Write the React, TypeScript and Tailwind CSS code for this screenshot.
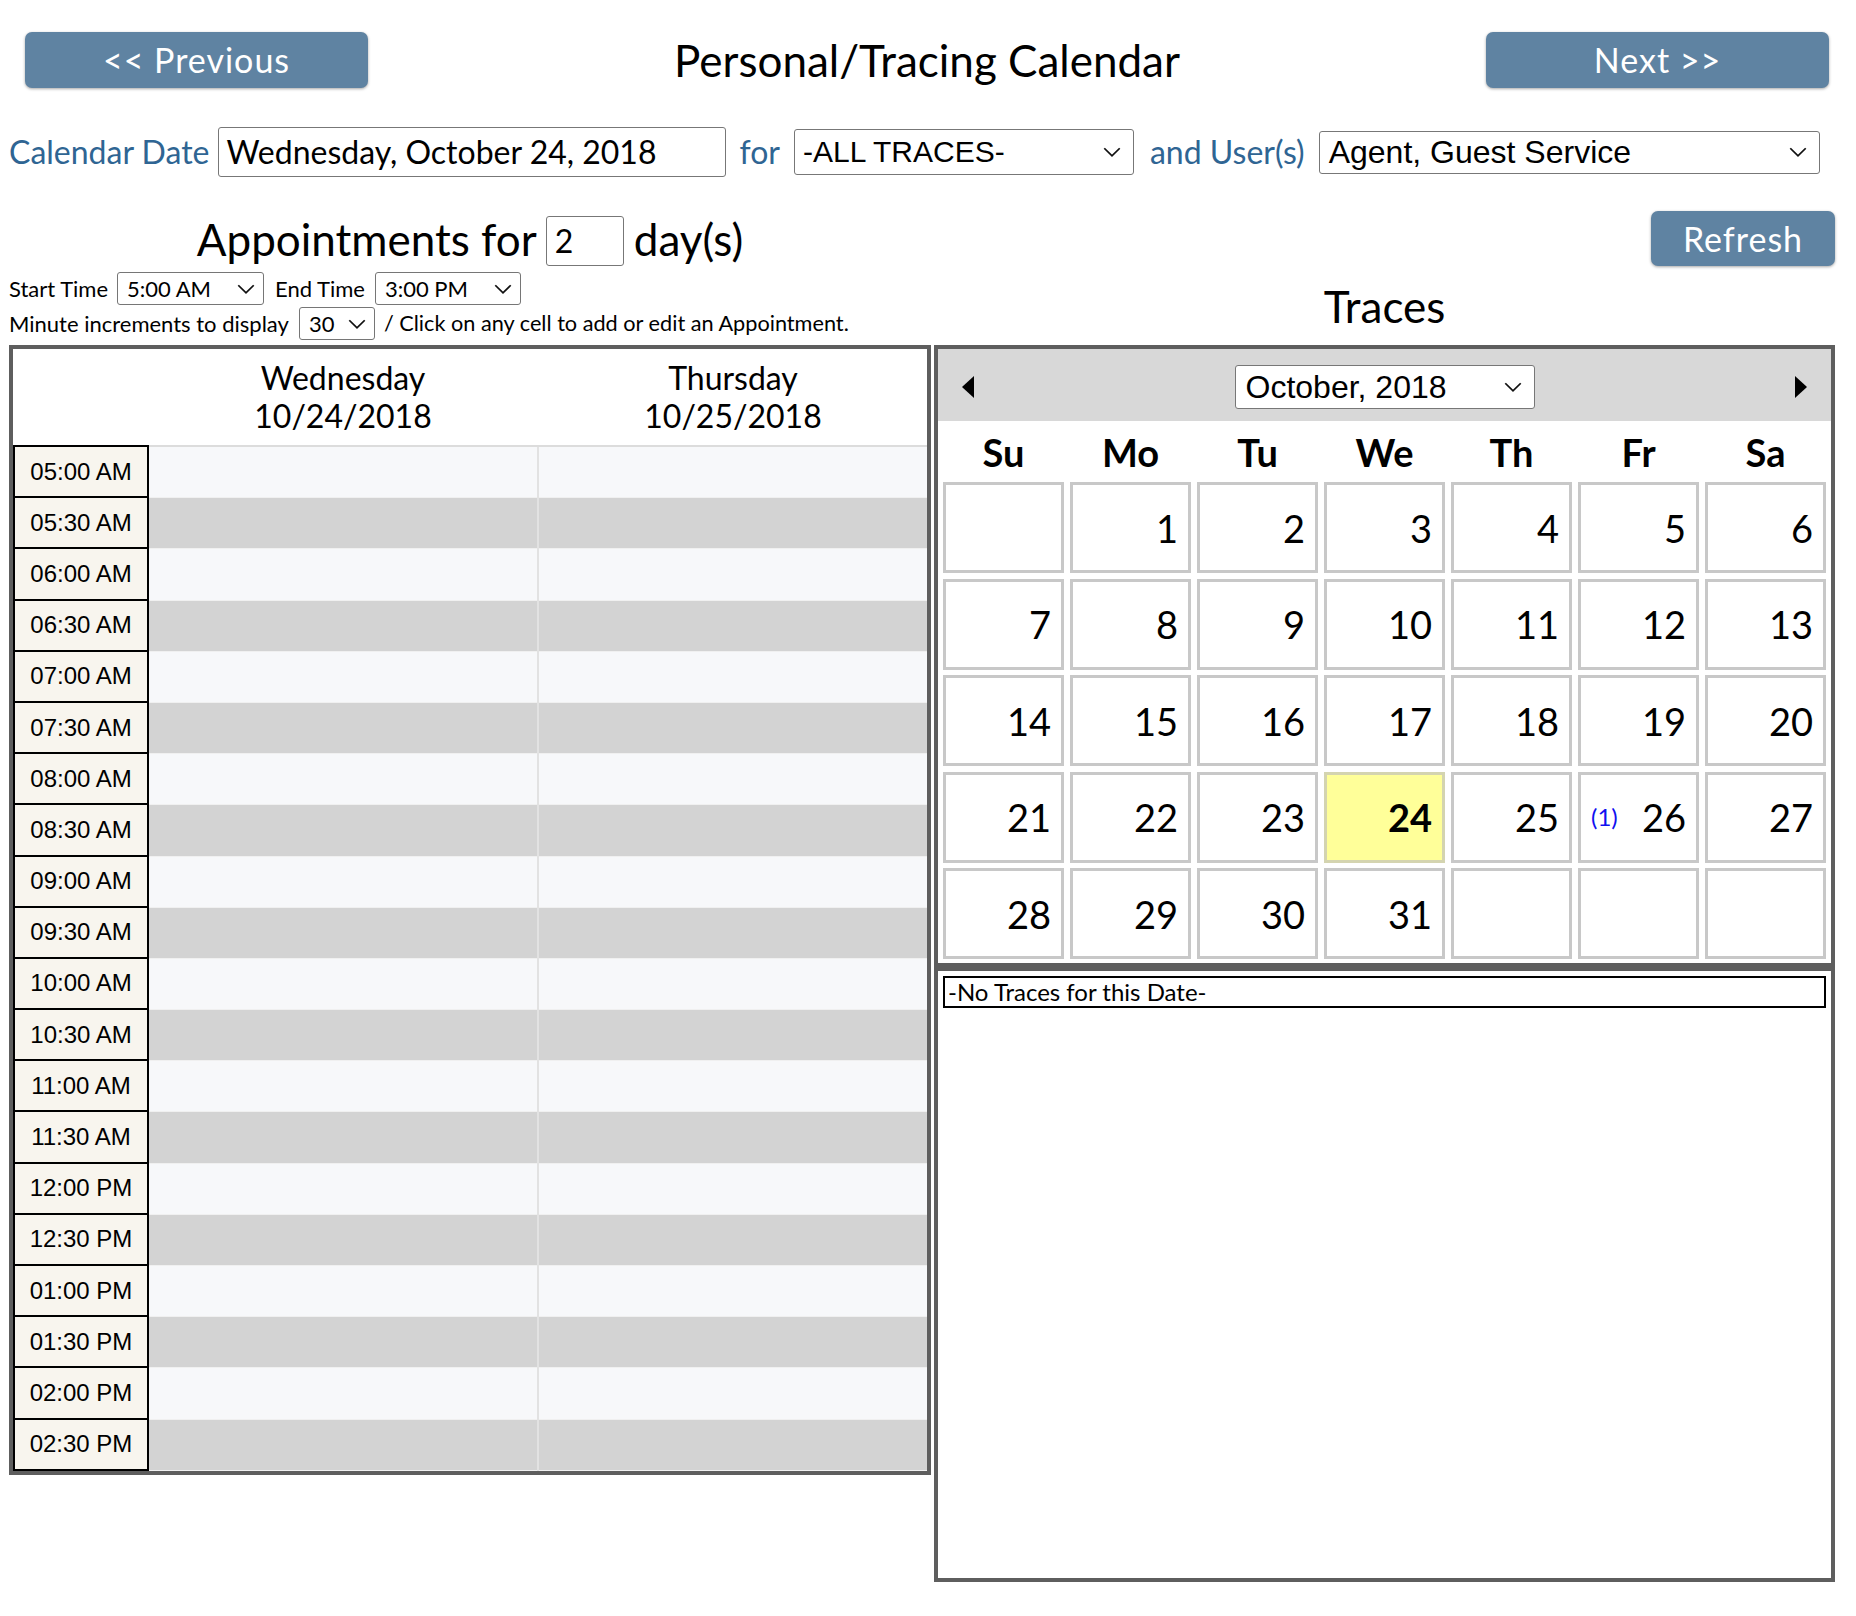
import React from "react";

const Chevron = ({ w = 14, h = 8 }: { w?: number; h?: number }) => (
  <svg width={w} height={h} viewBox="0 0 14 8" fill="none" preserveAspectRatio="none">
    <polyline points="1,1 7,7 13,1" stroke="#111" strokeWidth="1.4" fill="none" />
  </svg>
);

const Btn = ({ children, w, h }: { children: React.ReactNode; w: string; h: string }) => (
  <div
    className={`${w} ${h} rounded-[7px] bg-[#5f83a2] text-white text-[34px] tracking-[1px] leading-none flex items-center justify-center shadow-[0_1px_3px_rgba(0,0,0,0.35)]`}
  >
    {children}
  </div>
);

const times = [
  "05:00 AM", "05:30 AM", "06:00 AM", "06:30 AM", "07:00 AM", "07:30 AM", "08:00 AM", "08:30 AM",
  "09:00 AM", "09:30 AM", "10:00 AM", "10:30 AM", "11:00 AM", "11:30 AM", "12:00 PM", "12:30 PM",
  "01:00 PM", "01:30 PM", "02:00 PM", "02:30 PM",
];

const days: (number | null)[] = [
  null, 1, 2, 3, 4, 5, 6,
  7, 8, 9, 10, 11, 12, 13,
  14, 15, 16, 17, 18, 19, 20,
  21, 22, 23, 24, 25, 26, 27,
  28, 29, 30, 31, null, null, null,
];

const SmallSelect = ({ w, value }: { w: string; value: string }) => (
  <div className={`${w} h-[33px] border border-[#767676] rounded-[3px] flex items-center justify-between pl-[9px] pr-[8px] text-[22px] leading-none bg-white`}>
    <span>{value}</span>
    <Chevron w={18} h={10} />
  </div>
);

export default function App() {
  return (
    <div className="w-[1856px] min-h-[1616px] bg-white font-['Lato',sans-serif] text-black">
      {/* Header */}
      <div className="flex items-center justify-between pl-[25px] pr-[27px] pt-[32px]">
        <Btn w="w-[343px]" h="h-[56px]">&lt;&lt; Previous</Btn>
        <div className="text-[44px] leading-none">Personal/Tracing Calendar</div>
        <Btn w="w-[343px]" h="h-[56px]">Next &gt;&gt;</Btn>
      </div>

      {/* Filter row */}
      <div className="mt-[39px] h-[50px] flex items-center pl-[9px] text-[32px] leading-none">
        <span className="text-[#2f6593]">Calendar Date</span>
        <div className="ml-[9px] w-[508px] h-[50px] border border-[#777] rounded-[3px] flex items-center pl-[7px]">
          Wednesday, October 24, 2018
        </div>
        <span className="ml-[13px] text-[#2f6593]">for</span>
        <div className="ml-[14px] w-[340px] h-[46px] border border-[#777] rounded-[3px] flex items-center justify-between pl-[8px] pr-[12px] font-['Liberation_Sans',Arial,sans-serif] text-[30px]">
          <span>-ALL TRACES-</span>
          <Chevron w={18} h={10} />
        </div>
        <span className="ml-[16px] text-[#2f6593]">and User(s)</span>
        <div className="ml-[14px] w-[501px] h-[43px] border border-[#777] rounded-[3px] flex items-center justify-between pl-[9px] pr-[12px] font-['Liberation_Sans',Arial,sans-serif] text-[32px]">
          <span>Agent, Guest Service</span>
          <Chevron w={18} h={10} />
        </div>
      </div>

      {/* Main columns */}
      <div className="mt-[34px] flex pl-[9px] gap-[3px]">
        {/* Left: appointments */}
        <div className="w-[922px] pt-[5px]">
          <div className="h-[50px] flex items-center justify-center text-[44px] leading-none">
            <span className="-mt-[4px]">Appointments for</span>
            <div className="ml-[9px] w-[78px] h-[50px] border border-[#777] rounded-[3px] flex items-center pl-[8px] text-[32px]">
              2
            </div>
            <span className="ml-[10px] -mt-[4px]">day(s)</span>
          </div>

          <div className="mt-[6px] h-[33px] flex items-center text-[22px] leading-none">
            <span>Start Time</span>
            <div className="ml-[9px]">
              <SmallSelect w="w-[147px]" value="5:00 AM" />
            </div>
            <span className="ml-[11px]">End Time</span>
            <div className="ml-[10px]">
              <SmallSelect w="w-[146px]" value="3:00 PM" />
            </div>
          </div>

          <div className="mt-[2px] h-[33px] flex items-center text-[22px] leading-none">
            <span>Minute increments to display</span>
            <div className="ml-[10px]">
              <SmallSelect w="w-[76px]" value="30" />
            </div>
            <span className="ml-[9px] text-[21.7px]">/ Click on any cell to add or edit an Appointment.</span>
          </div>

          {/* Schedule table */}
          <div className="mt-[5px] w-[922px] border-4 border-[#5e5e5e] bg-white">
            <div className="flex h-[96px] text-[32px] leading-[38px]">
              <div className="w-[136px]" />
              <div className="flex-1 flex flex-col items-center justify-center">
                <span>Wednesday</span>
                <span>10/24/2018</span>
              </div>
              <div className="w-[2px]" />
              <div className="flex-1 flex flex-col items-center justify-center">
                <span>Thursday</span>
                <span>10/25/2018</span>
              </div>
            </div>
            <div className="flex h-[2px]">
              <div className="w-[136px] bg-black" />
              <div className="flex-1 bg-[#dcdcdc]" />
            </div>
            {times.map((t, i) => {
              const bg = i % 2 === 0 ? "bg-[#f7f8fa]" : "bg-[#d3d3d3]";
              return (
                <div key={t} className="flex h-[51.2px]">
                  <div className="w-[136px] border-x-2 border-b-2 border-black bg-[#f8f5ee] flex items-center justify-center font-['Liberation_Sans',Arial,sans-serif] text-[24px] leading-none">
                    {t}
                  </div>
                  <div className={`flex-1 ${bg} border-b border-[#f0f0f0]`} />
                  <div className="w-[2px] bg-[#e2e2e2]" />
                  <div className={`flex-1 ${bg} border-b border-[#f0f0f0]`} />
                </div>
              );
            })}
          </div>
        </div>

        {/* Right: traces */}
        <div className="w-[901px]">
          <div className="flex justify-end">
            <Btn w="w-[184px]" h="h-[55px]">Refresh</Btn>
          </div>
          <div className="h-[79px] flex items-center justify-center text-[44px] leading-none">Traces</div>

          {/* Calendar */}
          <div className="border-4 border-[#5e5e5e] bg-white pb-[4px]">
            <div className="h-[72px] bg-[#d8d8d8] flex items-center justify-between px-[24px] pt-[4px]">
              <svg width="12" height="22" viewBox="0 0 12 22">
                <polygon points="12,0 0,11 12,22" fill="#000" />
              </svg>
              <div className="w-[300px] h-[44px] bg-white border border-[#777] rounded-[3px] flex items-center justify-between pl-[10px] pr-[12px] font-['Liberation_Sans',Arial,sans-serif] text-[32px] leading-none">
                <span>October, 2018</span>
                <Chevron w={18} h={10} />
              </div>
              <svg width="12" height="22" viewBox="0 0 12 22">
                <polygon points="0,0 12,11 0,22" fill="#000" />
              </svg>
            </div>
            <div className="px-[5px]">
              <div className="grid grid-cols-[repeat(7,121px)] gap-x-[6px] h-[61px] items-center text-center font-bold text-[38px] leading-none">
                {["Su", "Mo", "Tu", "We", "Th", "Fr", "Sa"].map((d) => (
                  <div key={d}>{d}</div>
                ))}
              </div>
              <div className="grid grid-cols-[repeat(7,121px)] gap-x-[6px] gap-y-[5.5px]">
                {days.map((d, i) => {
                  const today = d === 24;
                  return (
                    <div
                      key={i}
                      className={`h-[91px] border-[3px] ${today ? "bg-[#ffff99] border-[#d4d4b0] font-bold" : "bg-white border-[#c8c8c8]"} flex items-center ${d === 26 ? "justify-between pl-[10px]" : "justify-end"} pr-[10px] text-[38px] leading-none`}
                    >
                      {d === 26 && <span className="text-[24px] text-[#1010f0]">(1)</span>}
                      {d !== null && <span>{d}</span>}
                    </div>
                  );
                })}
              </div>
            </div>
          </div>

          {/* Trace list */}
          <div className="h-[615px] border-4 border-[#5e5e5e] bg-white px-[5px] pt-[5px]">
            <div className="h-[32px] border-2 border-black flex items-center pl-[3px] text-[24px] leading-none">
              -No Traces for this Date-
            </div>
          </div>
        </div>
      </div>
    </div>
  );
}
